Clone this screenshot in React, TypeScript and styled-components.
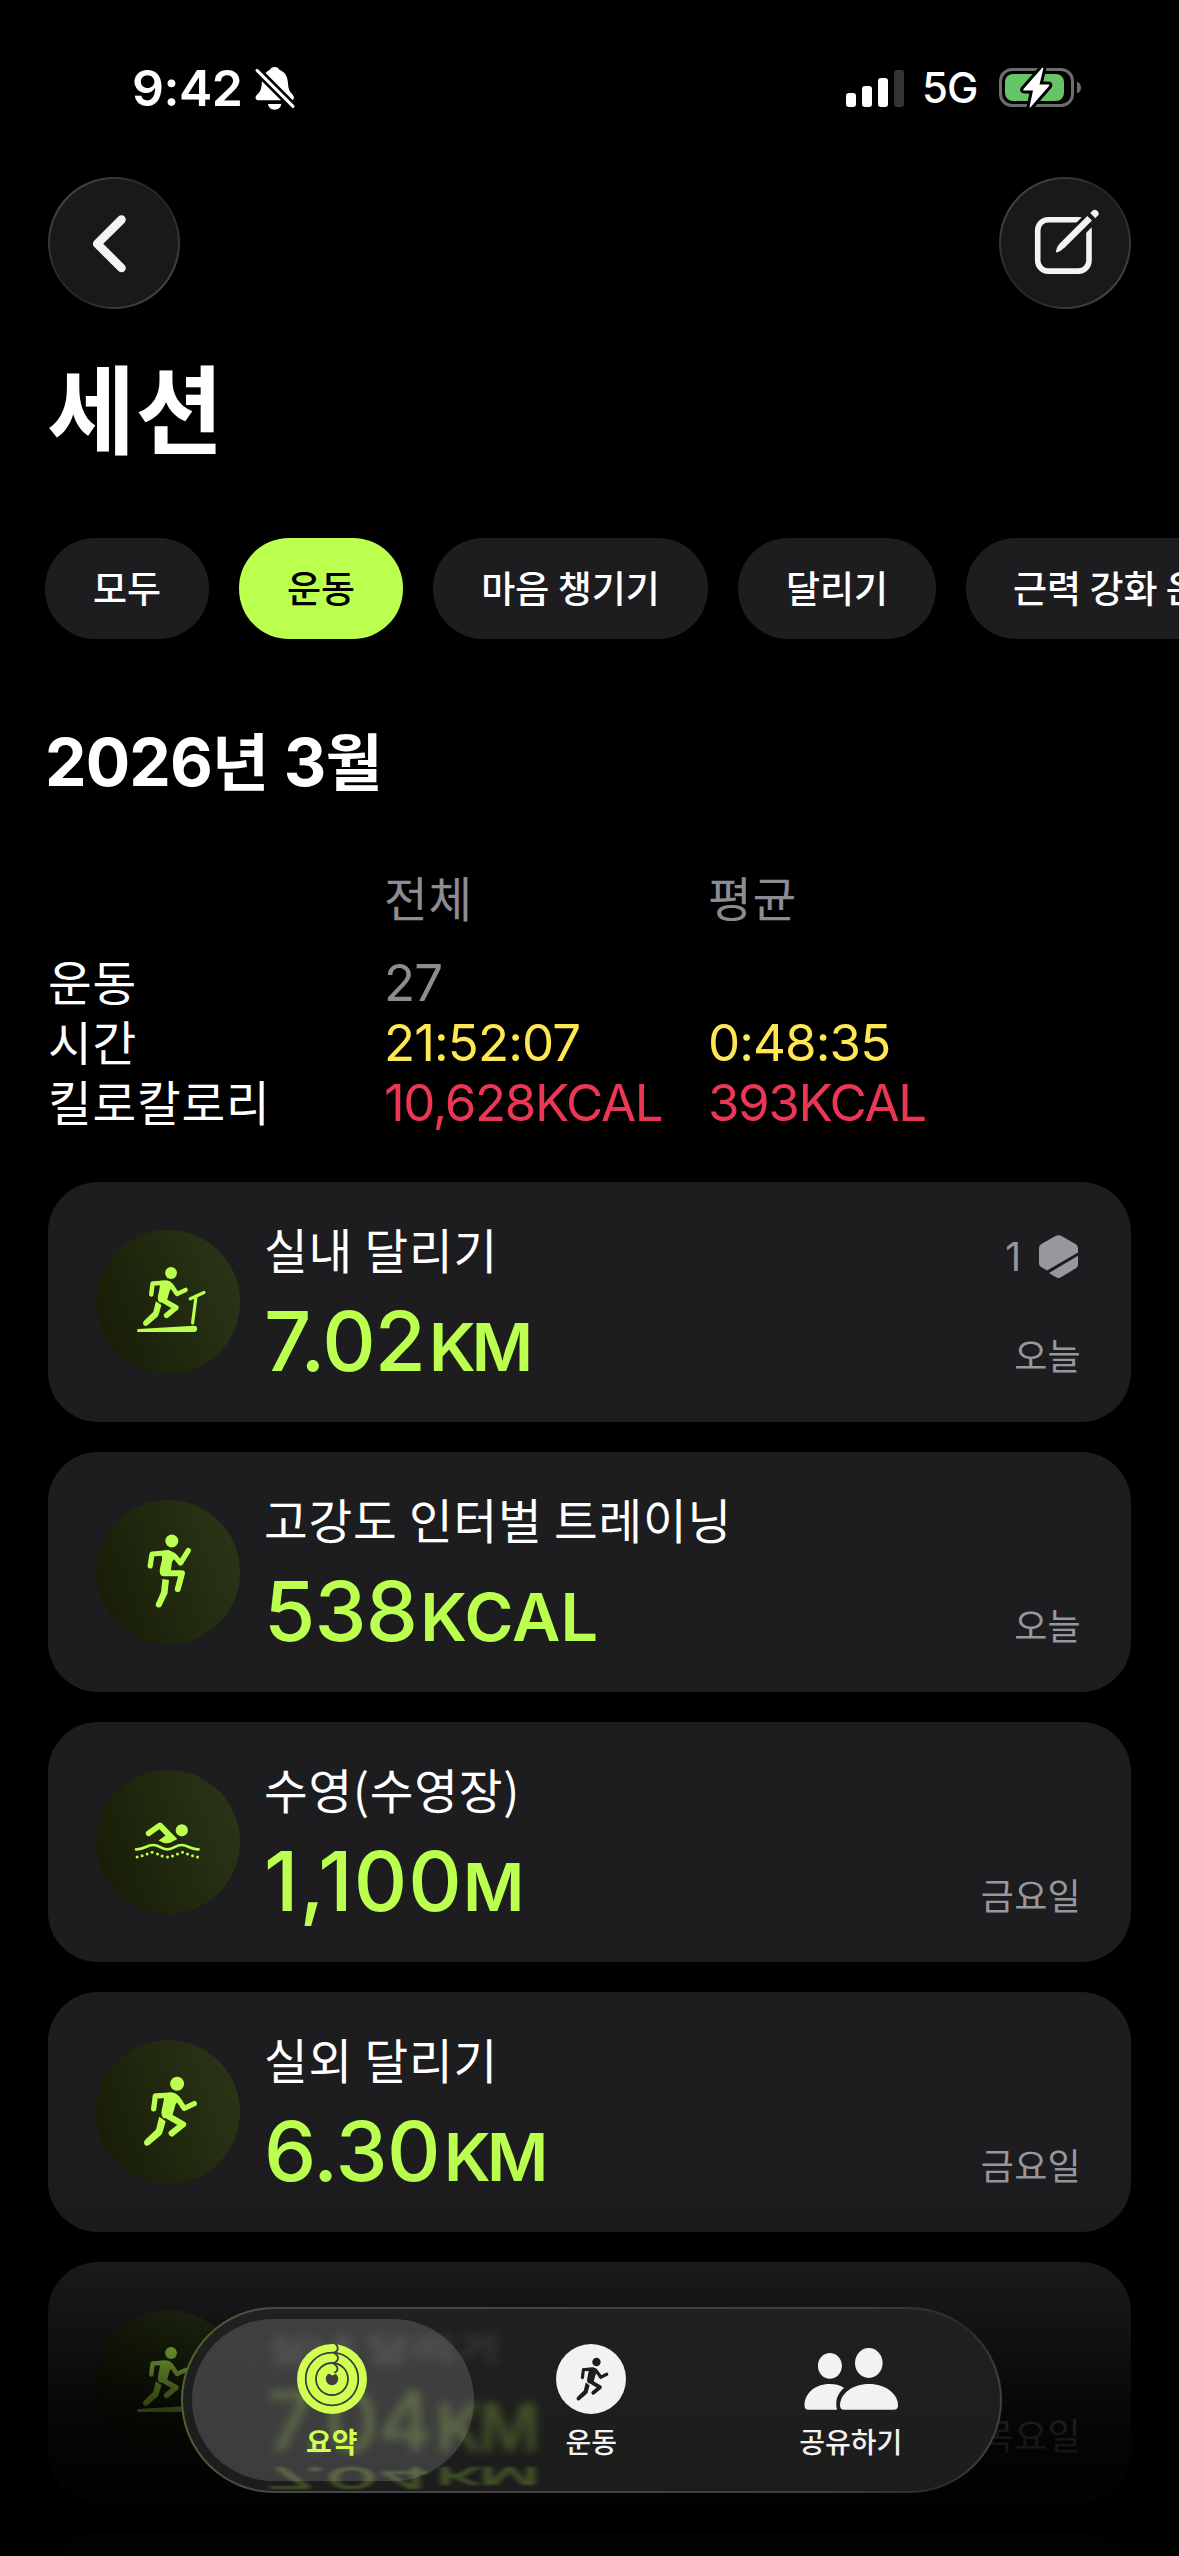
import React from "react";
import styled, { createGlobalStyle, css } from "styled-components";

const LIME = "#bbff4f";
const GREY = "#8d8c92";

const GlobalStyle = createGlobalStyle`
  * { box-sizing: border-box; }
  body {
    margin: 0;
    background: #000;
    color: #fff;
    font-family: Inter, "Noto Sans CJK KR", sans-serif;
  }
`;

const Screen = styled.main`
  position: relative;
  display: flex;
  flex-direction: column;
  width: 1179px;
  height: 2556px;
  overflow: hidden;
  background: #000;
  > * { flex: none; }
`;

/* Hangul runs use the Korean face at their own size so they sit next to Inter digits. */
const Ko = styled.span<{ $size: number; $weight?: number; $track?: number }>`
  font-family: "Noto Sans CJK KR", sans-serif;
  font-size: ${(p) => p.$size}px;
  font-weight: ${(p) => p.$weight ?? 400};
  letter-spacing: ${(p) => p.$track ?? 0}px;
  white-space: pre;
`;

const StatusBar = styled.header`
  display: flex;
  justify-content: space-between;
  align-items: center;
  height: 176px;
  padding: 0 97px 0 132px;
`;

const StatusGroup = styled.div<{ $gap: number }>`
  display: flex;
  align-items: center;
  gap: ${(p) => p.$gap}px;
`;

const Clock = styled.span`
  font-size: 50px;
  font-weight: 600;
  line-height: 60px;
  letter-spacing: -0.5px;
`;

const Network = styled.span`
  width: 95px;
  padding-left: 18px;
  font-size: 42px;
  font-weight: 500;
  line-height: 50px;
  letter-spacing: -1px;
`;

const NavBar = styled.nav`
  display: flex;
  justify-content: space-between;
  height: 132px;
  margin-top: 1px;
  padding: 0 48px;
`;

const GlassButton = styled.button`
  width: 132px;
  height: 132px;
  padding: 0;
  border: 2px solid transparent;
  border-radius: 50%;
  background:
    linear-gradient(#191919, #191919) padding-box,
    linear-gradient(135deg, #4a4a4a 8%, #262626 42%, #262626 58%, #4a4a4a 92%) border-box;
  svg { display: block; margin: -2px; }
`;

const Title = styled.h1`
  height: 128px;
  margin: 32px 0 69px;
  padding-left: 47px;
  line-height: 128px;
`;

const Chips = styled.div`
  display: flex;
  gap: 30px;
  height: 101px;
  padding-left: 45px;
`;

const Chip = styled.button<{ $active?: boolean; $width: number }>`
  flex: none;
  width: ${(p) => p.$width}px;
  padding: 0 0 2px;
  border: 0;
  border-radius: 50px;
  background: ${(p) => (p.$active ? LIME : "#1d1d1f")};
  color: ${(p) => (p.$active ? "#000" : "#fff")};
  line-height: 98px;
`;

const Month = styled.h2`
  height: 80px;
  margin: 80px 0 69px;
  padding-left: 45px;
  font-size: 66px;
  font-weight: 700;
  line-height: 80px;
  letter-spacing: -0.9px;
  white-space: pre;
`;

const Stats = styled.section`
  display: grid;
  grid-template-columns: 336px 324px 1fr;
  grid-template-rows: 84px 60px 60px 60px;
  height: 314px;
  padding-left: 48px;
  line-height: 60px;
`;

const Num = styled.span<{ $color: string; $track?: number }>`
  padding-top: 1px;
  color: ${(p) => p.$color};
  font-size: 51px;
  letter-spacing: ${(p) => p.$track ?? -0.9}px;
`;

const Head = styled.div`
  margin-top: -1px;
  color: ${GREY};
`;

const RowLabel = styled.div`
  margin-top: -1px;
`;

const List = styled.section`
  display: flex;
  flex-direction: column;
  gap: 30px;
  padding: 0 48px;
`;

const Card = styled.article`
  display: flex;
  flex: none;
  height: 240px;
  padding: 48px 50px 0 48px;
  border-radius: 50px;
  background: #1d1d1f;
`;

const Badge = styled.div`
  flex: none;
  width: 144px;
  height: 144px;
  border-radius: 50%;
  background: linear-gradient(70deg, #171c06 5%, #2a3618 95%);
  color: ${LIME};
`;

const CardBody = styled.div`
  flex: 1;
  padding-left: 24px;
`;

const CardTitle = styled.div`
  height: 38px;
  line-height: 38px;
`;

const Value = styled.div`
  display: flex;
  align-items: baseline;
  height: 100px;
  margin-top: 23px;
  color: ${LIME};
  font-size: 83px;
  font-weight: 500;
  line-height: 100px;
`;

const Digits = styled.span<{ $track: number }>`
  letter-spacing: ${(p) => p.$track}px;
`;

const Unit = styled.span<{ $track: number; $lead: number }>`
  margin-left: ${(p) => p.$lead}px;
  font-size: 66.5px;
  font-weight: 600;
  letter-spacing: ${(p) => p.$track}px;
`;

const CardSide = styled.div`
  display: flex;
  flex-direction: column;
  justify-content: space-between;
  align-items: flex-end;
  height: 162px;
  color: #98979e;
`;

const Award = styled.div`
  display: flex;
  align-items: center;
  gap: 18px;
  height: 52px;
  padding-right: 3px;
  font-size: 39px;
`;

const When = styled.div`
  margin-top: auto;
  line-height: 56px;
`;

const Fade = styled.div`
  position: absolute;
  left: 0;
  right: 0;
  bottom: 0;
  height: 396px;
  background: linear-gradient(
    rgba(0, 0, 0, 0) 0,
    rgba(0, 0, 0, 0.12) 102px,
    rgba(0, 0, 0, 0.28) 145px,
    rgba(0, 0, 0, 0.47) 190px,
    rgba(0, 0, 0, 0.72) 240px,
    rgba(0, 0, 0, 0.84) 270px,
    rgba(0, 0, 0, 0.92) 330px,
    rgba(0, 0, 0, 0.94) 396px
  );
`;

const TabBar = styled.div`
  position: absolute;
  left: 181px;
  top: 2307px;
  width: 821px;
  height: 186px;
  padding-left: 19px;
  border: 2px solid transparent;
  border-radius: 93px;
  overflow: hidden;
  background:
    linear-gradient(#202020, #1c1c1c) padding-box,
    linear-gradient(100deg, #4f6a2c 0, #474747 12%, #3d3d3d 80%, #2a2a2a 92%, #484848 100%) border-box;
`;

const TabsRow = styled.div`
  display: flex;
`;

const Tab = styled.div<{ $active?: boolean }>`
  position: relative;
  display: flex;
  flex-direction: column;
  align-items: center;
  width: 259.5px;
  padding-top: 35px;
  color: ${(p) => (p.$active ? "#d0ff52" : "#f2f2f2")};
  svg { position: relative; display: block; }
  ${(p) =>
    p.$active &&
    css`
      &::before {
        content: "";
        position: absolute;
        left: -10px;
        top: 10px;
        width: 282px;
        height: 162px;
        border-radius: 81px;
        background: rgba(255, 255, 255, 0.145);
      }
    `}
`;

const TabLabel = styled.span`
  position: relative;
  margin-top: 9px;
  line-height: 36px;
`;

/* Content refracted through the glass of the bar. */
const Refraction = styled.div<{ $top: number; $scale: number; $dim: number; $blur: number }>`
  position: absolute;
  left: 83px;
  top: ${(p) => p.$top}px;
  opacity: ${(p) => p.$dim};
  filter: blur(${(p) => p.$blur}px);
  transform: scaleY(${(p) => p.$scale});
  white-space: nowrap;
  pointer-events: none;
  ${Value} { margin-top: 0; }
`;

const BellOff = () => (
  <svg width="42" height="45" viewBox="0 0 126 135">
    <path
      d="M62 3C70 3 74 7 76 11C94 18 101 32 102 52C103 72 108 78 116 86C123 94 120 103 110 103L14 103C4 103 2 94 8 87C18 78 22 72 23 54C24 32 32 18 48 11C50 7 54 3 62 3Z"
      fill="#fff"
    />
    <path d="M42 114H82C80 126 72 131 62 131C52 131 44 126 42 114Z" fill="#fff" />
    <path d="M4 8L122 126" stroke="#000" strokeWidth="25" />
    <path d="M9 13L117 121" stroke="#fff" strokeWidth="9" strokeLinecap="round" />
  </svg>
);

const Signal = () => (
  <svg width="58" height="37" viewBox="0 0 58 37" fill="#fff">
    <rect x="0" y="23" width="10" height="14" rx="3" />
    <rect x="16" y="16" width="10" height="21" rx="3" />
    <rect x="32" y="8" width="10" height="29" rx="3" />
    <rect x="48" y="0" width="10" height="37" rx="3" fill="#343434" />
  </svg>
);

const Battery = () => (
  <svg width="83" height="44" viewBox="0 0 83 44">
    <rect x="1.5" y="3.5" width="72" height="36" rx="11.5" fill="none" stroke="#6d6d6d" strokeWidth="3" />
    <rect x="6" y="8" width="59" height="27" rx="8" fill="#65c466" />
    <path d="M78 15.5C80.500 16.500 82 18.500 82 21.500S80.500 26.500 78 27.500Z" fill="#6d6d6d" />
    <path
      d="M43 2L24.500 23Q23.500 24.500 25 24.500H34L30.500 41Q30.800 42 31.800 41L50 20Q51 18.500 49.500 18.500H40.500L44.300 2.500Q44 1 43 2Z"
      fill="#fff"
      stroke="#000"
      strokeWidth="6"
      strokeLinejoin="round"
      paintOrder="stroke"
    />
  </svg>
);

const Chevron = () => (
  <svg width="132" height="132" viewBox="0 0 132 132" fill="none">
    <path d="M73.500 42.600L49.200 66.800L73.500 91" stroke="#f3f3f3" strokeWidth="8.600" strokeLinecap="round" strokeLinejoin="round" />
  </svg>
);

const Compose = () => (
  <svg width="132" height="132" viewBox="0 0 132 132" fill="none">
    <rect x="38.700" y="42.800" width="51.300" height="51.300" rx="10.500" stroke="#f3f3f3" strokeWidth="5.600" />
    <path d="M62 71L97 36" stroke="#191919" strokeWidth="14" />
    <path d="M57 74.800Q57.200 70 61.500 65.700L88.300 38.900L93 43.600L66 70.300Q61.800 74.300 57.800 75.600Q57 75.700 57 74.800Z" fill="#f3f3f3" />
    <path d="M91.200 36L93.200 34A3.600 3.600 0 0 1 98.500 39.100L96.300 41.200Z" fill="#f3f3f3" />
  </svg>
);

const RunnerShape = () => (
  <g fill="none" stroke="currentColor" strokeLinecap="round" strokeLinejoin="round">
    <circle cx="81.100" cy="43.700" r="7" fill="currentColor" stroke="none" />
    <path d="M57.700 68.800L59.300 56L75 55.200C81 55.500 83 61 88.200 68.300L98.300 63.600" strokeWidth="5.300" />
    <path
      d="M68 52.900L76 52.400Q81 53 84 58L79.500 64.500L76.500 75L68 78.500Q64.500 76 65.800 70L68 59Z"
      fill="currentColor"
      stroke="none"
    />
    <path d="M69.500 74.500L87 84.400L75.800 93.300" strokeWidth="6.300" />
    <path d="M63.200 76.800L69.700 81.300L66.800 91.500Q66.300 93.500 65 95L53.200 105Q50 107 48.300 104.200Q47.200 102 49 100L60 89.500Z" fill="currentColor" stroke="none" />
  </g>
);

const Outdoor = () => (
  <svg width="144" height="144" viewBox="0 0 144 144">
    <RunnerShape />
  </svg>
);

const Treadmill = () => (
  <svg width="144" height="144" viewBox="0 0 144 144">
    <g transform="translate(6.500 5.700) scale(.845 .853)">
      <RunnerShape />
    </g>
    <path d="M94.300 68.800L108 62.500M100 66.500L96.600 93" stroke="currentColor" strokeWidth="3.200" strokeLinecap="round" fill="none" />
    <path d="M42.500 99L98 95.700A3.100 3.100 0 0 1 98 102H42.500A1.500 1.500 0 0 1 42.500 99Z" fill="currentColor" />
  </svg>
);

const Interval = () => (
  <svg width="144" height="144" viewBox="0 0 144 144">
    <g fill="none" stroke="currentColor" strokeLinecap="round" strokeLinejoin="round">
      <circle cx="75.800" cy="41" r="6.500" fill="currentColor" stroke="none" />
      <path d="M54.200 66L56 54L71 52.800C77 53.200 79.500 57 84.500 63L92.300 50.500" strokeWidth="5.200" />
      <path d="M66 51L73 50L80 56L76 62L74.500 73L65 75Q63 73 64 68L66 60Z" fill="currentColor" stroke="none" />
      <path d="M67.500 73.300H86L81.800 89" strokeWidth="6" />
      <path d="M66.500 79L73 80L71.500 93.500L65.500 106Q64 108.300 61.300 107.300Q59 106 60 103.500L65 92Z" fill="currentColor" stroke="none" />
    </g>
  </svg>
);

const dots = [
  [41.1, 87], [46.1, 85.7], [51.1, 84], [56.1, 82.3], [61.5, 84], [66.1, 86], [71.5, 87],
  [76.5, 86], [81.5, 84], [86.5, 82.3], [91.5, 84], [96.5, 85.7], [101.5, 87],
];

const Swimmer = () => (
  <svg width="144" height="144" viewBox="0 0 144 144">
    <circle cx="85.800" cy="60.300" r="6.100" fill="currentColor" />
    <path d="M52.600 63.400L64 55.300L70 62" stroke="currentColor" strokeWidth="5.600" strokeLinecap="round" strokeLinejoin="round" fill="none" />
    <path d="M66 53.500L81.300 69L77 71.300Q71 75.500 62.500 70.500L69.500 65.500L62 57.500Z" fill="currentColor" />
    <path
      d="M40 79.300C49 79.800 50 75 57 75S64.500 79.300 71.300 79.300S79 75 85.600 75S94 79.800 102.500 79.300"
      stroke="currentColor"
      strokeWidth="2.700"
      strokeLinecap="round"
      fill="none"
    />
    {dots.map(([x, y]) => (
      <circle key={x} cx={x} cy={y} r="1.500" fill="currentColor" />
    ))}
  </svg>
);

const Hexagon = () => (
  <svg width="39" height="43" viewBox="0 0 39 43" fill="currentColor">
    <path d="M17 .8Q19.500 -.5 22 .8L36.500 9Q39 10.500 39 13V17.500L8 35.500L2 32Q0 30.700 0 28.500V13Q0 10.500 2.300 9Z" />
    <path d="M39 20.800V29.500Q39 32 36.800 33.300L22 42.300Q19.500 43.500 17 42.300L10 38Z" />
  </svg>
);

const Rings = () => (
  <svg width="70" height="70" viewBox="-35 -35 70 70">
    <circle r="35" fill="currentColor" />
    <g fill="none" stroke="#3d3d3d" strokeWidth="1.800">
      <circle r="26.300" />
      <circle r="16" />
      <path d="M3.500 -35Q5.800 -33.300 5.800 -30.600T2 -26.300M2 -26Q6 -24 6 -21T2 -16M1 -15.700Q5.800 -13 5.500 -10T2 -6" />
    </g>
    <circle r="6.200" fill="#3d3d3d" />
    <path d="M-5 -7H0Q3 -7 3 -4.500L0 -3.500Z" fill="currentColor" />
  </svg>
);

const WorkoutTabIcon = () => (
  <svg width="70" height="70" viewBox="-35 -35 70 70" color="#1d1d1d">
    <circle r="35" fill="#f2f2f2" />
    <g transform="translate(-43.200 -44.100) scale(.6 .62)">
      <RunnerShape />
    </g>
  </svg>
);

const People = () => (
  <svg width="94" height="70" viewBox="803 2344 94 70" fill="currentColor">
    <ellipse cx="828.900" cy="2365.800" rx="12" ry="12.900" />
    <ellipse cx="867.800" cy="2363" rx="13.800" ry="15" />
    <path d="M807.500 2409.700Q803.500 2409.700 803.500 2405.500C803.500 2394 813 2384 829 2384Q838 2384 843 2388C836 2394 834 2401 836 2409.700Z" />
    <path d="M843.500 2409.700Q839 2409.700 839 2405.500C839 2394 851 2384 868 2384S897 2394 897 2405.500Q897 2409.700 892.500 2409.700Z" />
  </svg>
);

type Measure = { digits: string; unit: string; track: number; unitTrack: number; lead: number };
type Session = { title: string; when: string; Icon: React.FC; award?: number; measure?: Measure };

const sessions: Session[] = [
  {
    title: "실내 달리기",
    when: "오늘",
    Icon: Treadmill,
    award: 1,
    measure: { digits: "7.02", unit: "KM", track: -0.9, unitTrack: -4, lead: 4 },
  },
  {
    title: "고강도 인터벌 트레이닝",
    when: "오늘",
    Icon: Interval,
    measure: { digits: "538", unit: "KCAL", track: -0.8, unitTrack: 0.1, lead: 3 },
  },
  {
    title: "수영(수영장)",
    when: "금요일",
    Icon: Swimmer,
    measure: { digits: "1,100", unit: "M", track: 1, unitTrack: 0, lead: 0 },
  },
  {
    title: "실외 달리기",
    when: "금요일",
    Icon: Outdoor,
    measure: { digits: "6.30", unit: "KM", track: -0.6, unitTrack: -3.6, lead: 4 },
  },
  { title: "", when: "목요일", Icon: Treadmill },
];

const behindBar: Measure = { digits: "7.04", unit: "KM", track: -0.5, unitTrack: -4, lead: 4 };

const chips = [
  { label: "모두", width: 164 },
  { label: "운동", width: 164, active: true },
  { label: "마음 챙기기", width: 275 },
  { label: "달리기", width: 198 },
  { label: "근력 강화 운동", width: 315 },
];

const BodyKo = ({ text }: { text: string }) => (
  <Ko $size={47.5} $track={0.8}>
    {text}
  </Ko>
);

const Reading = ({ m }: { m: Measure }) => (
  <Value>
    <Digits $track={m.track}>{m.digits}</Digits>
    <Unit $track={m.unitTrack} $lead={m.lead}>
      {m.unit}
    </Unit>
  </Value>
);

export default function App() {
  return (
    <Screen>
      <GlobalStyle />
      <StatusBar>
        <StatusGroup $gap={12}>
          <Clock>9:42</Clock>
          <BellOff />
        </StatusGroup>
        <StatusGroup $gap={0}>
          <Signal />
          <Network>5G</Network>
          <Battery />
        </StatusGroup>
      </StatusBar>
      <NavBar>
        <GlassButton aria-label="뒤로">
          <Chevron />
        </GlassButton>
        <GlassButton aria-label="편집">
          <Compose />
        </GlassButton>
      </NavBar>
      <Title>
        <Ko $size={96} $weight={700}>세션</Ko>
      </Title>
      <Chips>
        {chips.map((c) => (
          <Chip key={c.label} $width={c.width} $active={c.active}>
            <Ko $size={37} $weight={500}>{c.label}</Ko>
          </Chip>
        ))}
      </Chips>
      <Month>
        2026<Ko $size={62} $weight={700}>년</Ko> 3<Ko $size={62} $weight={700}>월</Ko>
      </Month>
      <Stats>
        <span />
        <Head><BodyKo text="전체" /></Head>
        <Head><BodyKo text="평균" /></Head>
        <RowLabel><BodyKo text="운동" /></RowLabel>
        <Num $color={GREY}>27</Num>
        <span />
        <RowLabel><BodyKo text="시간" /></RowLabel>
        <Num $color="#ffe754">21:52:07</Num>
        <Num $color="#ffe754">0:48:35</Num>
        <RowLabel><BodyKo text="킬로칼로리" /></RowLabel>
        <Num $color="#ec3655" $track={-1.4}>10,628KCAL</Num>
        <Num $color="#ec3655" $track={-1.4}>393KCAL</Num>
      </Stats>
      <List>
        {sessions.map((s, i) => (
          <Card key={i}>
            <Badge>
              <s.Icon />
            </Badge>
            <CardBody>
              <CardTitle>
                <BodyKo text={s.title} />
              </CardTitle>
              {s.measure && <Reading m={s.measure} />}
            </CardBody>
            <CardSide>
              {s.award && (
                <Award>
                  {s.award}
                  <Hexagon />
                </Award>
              )}
              <When>
                <Ko $size={36} $track={0.3}>{s.when}</Ko>
              </When>
            </CardSide>
          </Card>
        ))}
        <Card />
      </List>
      <Fade />
      <TabBar>
        <Refraction $top={3} $scale={0.7} $dim={0.2} $blur={6}>
          <BodyKo text="실내 달리기" />
        </Refraction>
        <Refraction $top={62} $scale={1} $dim={0.24} $blur={5}>
          <Reading m={behindBar} />
        </Refraction>
        <Refraction $top={119} $scale={-0.36} $dim={0.24} $blur={3}>
          <Reading m={behindBar} />
        </Refraction>
        <Refraction $top={-62} $scale={0.36} $dim={0.4} $blur={2}>
          <Reading m={behindBar} />
        </Refraction>
        <TabsRow>
          <Tab $active>
            <Rings />
            <TabLabel>
              <Ko $size={28} $weight={700}>요약</Ko>
            </TabLabel>
          </Tab>
          <Tab>
            <WorkoutTabIcon />
            <TabLabel>
              <Ko $size={28} $weight={500}>운동</Ko>
            </TabLabel>
          </Tab>
          <Tab>
            <People />
            <TabLabel>
              <Ko $size={28} $weight={500}>공유하기</Ko>
            </TabLabel>
          </Tab>
        </TabsRow>
      </TabBar>
    </Screen>
  );
}
